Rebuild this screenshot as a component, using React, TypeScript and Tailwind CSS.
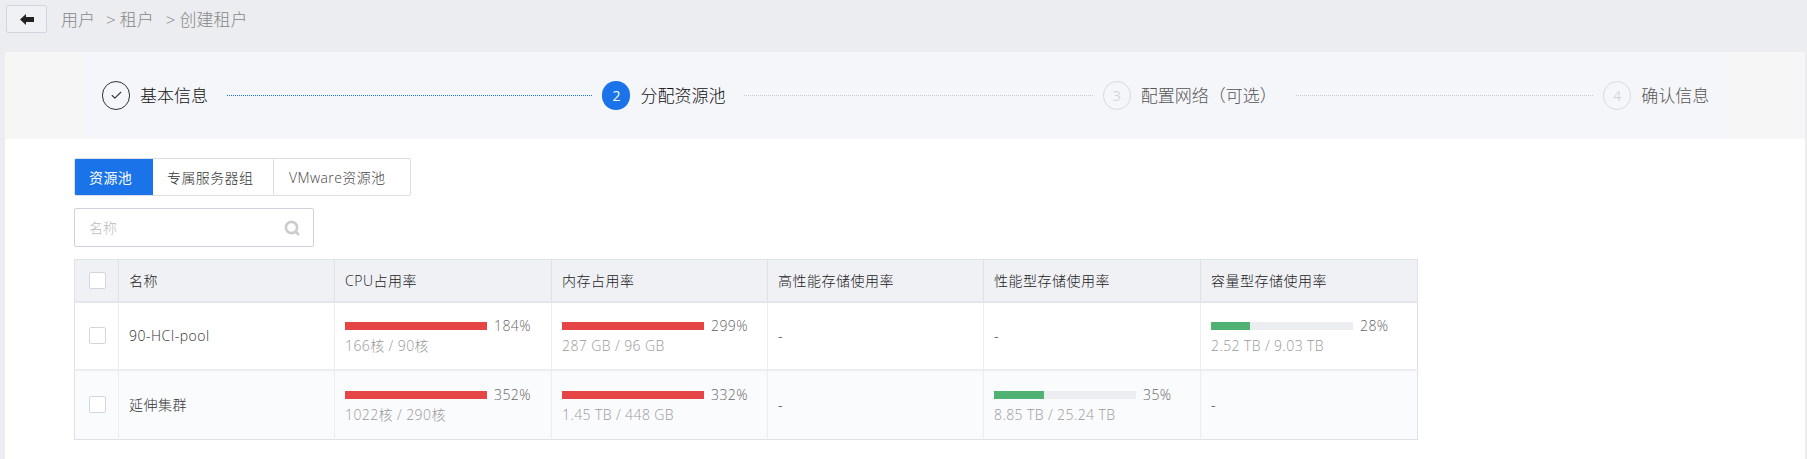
import { Check } from 'lucide-react'

const FONT = "font-['Open_Sans','Noto_Sans_CJK_SC',sans-serif]"

function Step({
  index,
  label,
  state,
  last,
}: {
  index: number
  label: string
  state: 'done' | 'active' | 'todo'
  last?: boolean
}) {
  return (
    <div className={`flex items-center ${last ? '' : 'w-[500.4px] shrink-0 pr-[10px]'}`}>
      {state === 'done' && (
        <span className="flex h-[29px] w-[28px] shrink-0 items-center justify-center rounded-full border border-[#333]">
          <Check size={13} strokeWidth={2} className="text-[#333]" />
        </span>
      )}
      {state === 'active' && (
        <span className="flex h-[29px] w-[28px] shrink-0 items-center justify-center rounded-full bg-[#1a73e8] text-[14px] text-white">
          {index}
        </span>
      )}
      {state === 'todo' && (
        <span className="flex h-[29px] w-[28px] shrink-0 items-center justify-center rounded-full border border-[#d9dade] text-[14px] text-[#d5d6da]">
          {index}
        </span>
      )}
      <span
        className={`ml-[10px] whitespace-nowrap text-[17px] font-light ${
          state === 'todo' ? 'text-[#555]' : 'text-[#111]'
        }`}
      >
        {label}
      </span>
      {!last && (
        <span
          className={`ml-[19px] flex-1 border-t border-dotted ${
            state === 'done' ? 'border-[#1a73e8]' : 'border-[#c9cad0]'
          }`}
        />
      )}
    </div>
  )
}

function Checkbox() {
  return <span className="block h-[17px] w-[17px] rounded-[2px] border border-[#d3d6e0] bg-white" />
}

function Usage({
  percent,
  fill,
  text,
  color,
}: {
  percent: string
  fill: number
  text: string
  color: 'red' | 'green'
}) {
  return (
    <div>
      <div className="flex items-center">
        <div className="h-[8px] w-[142px] bg-[#ecedf1]">
          <div
            className={`h-full ${color === 'red' ? 'bg-[#e64545]' : 'bg-[#4fb273]'}`}
            style={{ width: `${fill}%` }}
          />
        </div>
        <span className="ml-[7px] pt-[1px] text-[14px] leading-[20px] tracking-[0.4px] text-[#666]">{percent}</span>
      </div>
      <div className="text-[14px] leading-[20px] tracking-[0.4px] text-[#999]">{text}</div>
    </div>
  )
}

const headers = ['名称', 'CPU占用率', '内存占用率', '高性能存储使用率', '性能型存储使用率', '容量型存储使用率']

const rows = [
  {
    name: '90-HCI-pool',
    cells: [
      { percent: '184%', fill: 100, text: '166核 / 90核', color: 'red' as const },
      { percent: '299%', fill: 100, text: '287 GB / 96 GB', color: 'red' as const },
      null,
      null,
      { percent: '28%', fill: 27.5, text: '2.52 TB / 9.03 TB', color: 'green' as const },
    ],
  },
  {
    name: '延伸集群',
    cells: [
      { percent: '352%', fill: 100, text: '1022核 / 290核', color: 'red' as const },
      { percent: '332%', fill: 100, text: '1.45 TB / 448 GB', color: 'red' as const },
      null,
      { percent: '35%', fill: 35, text: '8.85 TB / 25.24 TB', color: 'green' as const },
      null,
    ],
  },
]

export default function App() {
  return (
    <div className={`flex h-[459px] flex-col overflow-hidden bg-[#ecedf1] ${FONT}`}>
      <div className="flex h-[52px] shrink-0 items-start pl-[6px] pt-[5px]">
        <button className="flex h-[28px] w-[41px] items-center justify-center rounded-[2px] border border-[#d3d5dc] bg-[#f0f1f4]">
          <svg width="14" height="11" viewBox="0 0 14 11" fill="#222">
            <path d="M0 5.5 6 0v3h8v5H6v3z" />
          </svg>
        </button>
        <div className="ml-[14px] flex h-[28px] items-center whitespace-nowrap pt-[1px] text-[17px] font-light text-[#888]">
          <span>用户</span>
          <span className="ml-[11px] mr-[4px]">&gt;</span>
          <span>租户</span>
          <span className="ml-[12px] mr-[4px]">&gt;</span>
          <span>创建租户</span>
        </div>
      </div>

      <div className="ml-[5px] mr-[2px] flex-1 bg-white">
        <div className="bg-[#f6f6f6] pl-[77px]">
          <div className="flex h-[87px] w-[1646px] items-center bg-[#f5f6fa] pl-[20px]">
            <Step index={1} label="基本信息" state="done" />
            <Step index={2} label="分配资源池" state="active" />
            <Step index={3} label="配置网络（可选）" state="todo" />
            <Step index={4} label="确认信息" state="todo" last />
          </div>
        </div>

        <div className="pl-[69px] pt-[19px]">
          <div className="flex h-[38px] w-[337px] overflow-hidden rounded-[2px] border border-[#dcdee6] text-[14px] font-light tracking-[0.4px]">
            <span className="-my-px -ml-px flex w-[79px] items-center bg-[#1a73e8] pl-[15px] font-normal text-white">
              资源池
            </span>
            <span className="flex w-[121px] items-center border-r border-[#dcdee6] pl-[14px] text-[#333]">
              专属服务器组
            </span>
            <span className="flex flex-1 items-center pl-[15px] text-[#444]">VMware资源池</span>
          </div>

          <div className="mt-[12px] flex h-[39px] w-[240px] items-center justify-between rounded-[2px] border border-[#cfd2de] pl-[14px] pr-[13px] text-[14px] font-light text-[#bbb]">
            <span>名称</span>
            <svg width="16" height="16" viewBox="0 0 16 16" fill="none" stroke="#ccc">
              <circle cx="7.5" cy="7.5" r="5.6" strokeWidth="2.6" />
              <path d="M11.5 11.5 15 15" strokeWidth="2.6" />
            </svg>
          </div>

          <table className="mt-[12px] w-[1344px] table-fixed border-collapse border border-[#dfe1e8] text-[14px] font-light tracking-[0.5px]">
            <colgroup>
              <col className="w-[44px]" />
              <col className="w-[216px]" />
              <col className="w-[217px]" />
              <col className="w-[216px]" />
              <col className="w-[216px]" />
              <col className="w-[217px]" />
              <col />
            </colgroup>
            <thead>
              <tr className="h-[42px] border-b-2 border-[#e4e6ec] bg-[#f0f1f5]">
                <th className="border-r border-[#dfe1e8] pl-[14px] font-normal">
                  <Checkbox />
                </th>
                {headers.map((h) => (
                  <th
                    key={h}
                    className="border-r border-[#dfe1e8] pl-[10px] text-left font-light text-[#222] last:border-r-0"
                  >
                    {h}
                  </th>
                ))}
              </tr>
            </thead>
            <tbody>
              {rows.map((row, i) => (
                <tr
                  key={row.name}
                  className={`${i === 0 ? 'h-[68px] border-b-2 border-[#ecedf1] bg-white' : 'h-[70px] bg-[#fafbfd]'}`}
                >
                  <td className="border-r border-[#ecedf1] pl-[14px]">
                    <Checkbox />
                  </td>
                  <td className="border-r border-[#ecedf1] pl-[10px] text-[#333]">{row.name}</td>
                  {row.cells.map((cell, j) => (
                    <td key={j} className="border-r border-[#ecedf1] pl-[10px] text-[#333] last:border-r-0">
                      {cell ? <Usage {...cell} /> : '-'}
                    </td>
                  ))}
                </tr>
              ))}
            </tbody>
          </table>
        </div>
      </div>
    </div>
  )
}
